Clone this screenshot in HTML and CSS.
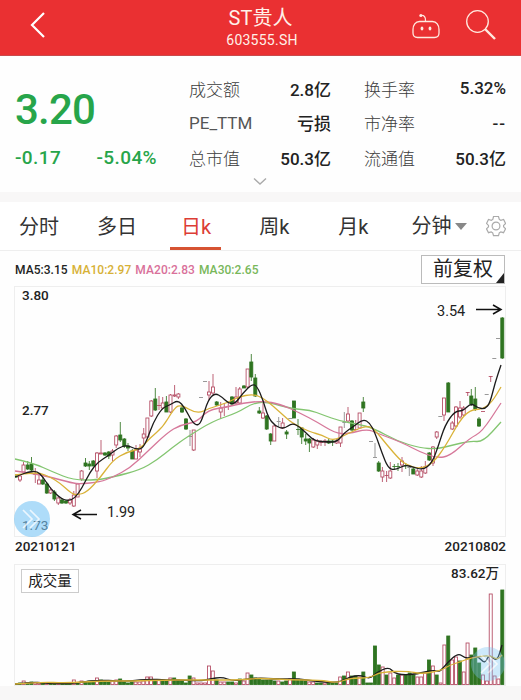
FILE: index.html
```html
<!DOCTYPE html>
<html lang="zh-CN">
<head>
  <meta charset="utf-8">
  <meta name="viewport" content="width=device-width, initial-scale=1">
  <title>ST贵人 603555.SH</title>
  <link rel="stylesheet" href="styles.css">
</head>
<body>
  <header class="topbar">
    <svg class="icon-back" width="20" height="30" viewBox="0 0 20 30"><path d="M16 3 4 15l12 12"/></svg>
    <div class="topbar-title">
      <h1>ST贵人</h1>
      <p>603555.SH</p>
    </div>
    <svg class="icon-robot" width="30" height="28" viewBox="0 0 30 28">
      <path d="M10 2.500c3-.5 5 1.500 4.500 6M8.500 8.500h13c4 0 6.500 3.500 6.500 8v3.500c0 3-1.500 4.500-4.500 4.500h-17C3.500 24.500 2 23 2 20v-3.500c0-4.500 2.500-8 6.500-8z"/>
      <circle cx="9.800" cy="2.600" r="1.500"/><ellipse cx="11" cy="15.500" rx="1.400" ry="1.900"/><ellipse cx="19" cy="15.500" rx="1.400" ry="1.900"/>
    </svg>
    <svg class="icon-search" width="32" height="32" viewBox="0 0 32 32"><circle cx="12.500" cy="12.500" r="10.800"/><path class="handle" d="m20 20 10 10"/></svg>
  </header>

  <section class="quote">
    <div class="price">
      <strong>3.20</strong>
      <div class="change"><span>-0.17</span><span>-5.04%</span></div>
    </div>
    <dl class="stats">
      <div><dt>成交额</dt><dd>2.8亿</dd></div>
      <div><dt>换手率</dt><dd>5.32%</dd></div>
      <div><dt class="latin">PE_TTM</dt><dd>亏损</dd></div>
      <div><dt>市净率</dt><dd class="dash">--</dd></div>
      <div><dt>总市值</dt><dd>50.3亿</dd></div>
      <div><dt>流通值</dt><dd>50.3亿</dd></div>
    </dl>
    <svg class="more" width="14" height="9" viewBox="0 0 14 9"><path d="m1 1.500 6 5.500 6-5.500"/></svg>
  </section>

  <nav class="tabs">
    <a>分时</a>
    <a>多日</a>
    <a class="active">日k</a>
    <a>周k</a>
    <a>月k</a>
    <a class="minute">分钟<i class="caret"></i></a>
    <svg class="icon-gear" width="20" height="22" viewBox="0 0 20 22"><path d="M7.500 1.500h5l.8 2.900 1.500.9 2.800-.8 2 4-2 1.900v1.400l2 2-2.100 3.900-2.700-.8-1.500.9-.8 2.800h-5l-.8-2.800-1.500-.9-2.700.8L.5 13.800l2-2v-1.400l-2-1.900 2-4 2.800.8 1.500-.9z"/><circle cx="10" cy="11" r="3.900"/></svg>
  </nav>

  <main class="chart">
    <div class="legend">
      <span class="ma5">MA5:3.15</span>
      <span class="ma10">MA10:2.97</span>
      <span class="ma20">MA20:2.83</span>
      <span class="ma30">MA30:2.65</span>
      <button class="adjust">前复权</button>
    </div>
    <div class="plot plot-price">
      <svg id="price" width="492" height="251" viewBox="14 286 492 251"></svg>
      <span class="label y-top">3.80</span>
      <span class="label y-mid">2.77</span>
      <span class="label y-low">1.73</span>
      <span class="label high">3.54</span>
      <span class="label low">1.99</span>
      <svg class="pager" width="36" height="36" viewBox="0 0 36 36"><circle cx="18" cy="18" r="18"/><path d="m9 9 9 9-9 9M16 9l9 9-9 9"/></svg>
    </div>
    <div class="dates"><span>20210121</span><span>20210802</span></div>
    <div class="plot plot-volume">
      <svg id="volume" width="492" height="122" viewBox="14 564 492 122"></svg>
      <span class="label vol-name">成交量</span>
      <span class="label vol-max">83.62万</span>
      <svg class="pager pager-right" width="36" height="36" viewBox="0 0 36 36"><circle cx="18" cy="18" r="17"/><path d="m11 9 9 9-9 9M18 9l9 9-9 9"/></svg>
    </div>
  </main>
  <script src="chart.js"></script>
</body>
</html>
```
FILE: styles.css
```css
* {
  box-sizing: border-box;
}

body {
  margin: 0;
  width: 521px;
  height: 700px;
  overflow: hidden;
  background: #f8f7f7;
  color: #222;
  font-family: Roboto, "Noto Sans CJK SC", sans-serif;
}

svg {
  display: block;
  fill: none;
}

/* top bar */
.topbar {
  display: flex;
  align-items: center;
  height: 56px;
  padding: 0 24px 0 28px;
  background: #ea3032;
  border-bottom: 1px solid #c94a4c;
  color: #fff0e8;
}

.topbar svg {
  stroke: #ffe9df;
  stroke-width: 1.3;
}

.topbar .icon-back {
  margin-top: -6px;
  stroke: #fff;
  stroke-width: 2.2;
}

.topbar-title {
  flex: 1;
  padding-left: 65px;
  text-align: center;
}

.topbar h1 {
  margin: 0 0 0 -3px;
  font-size: 20px;
  line-height: 26px;
  font-weight: 400;
}

.topbar p {
  margin: 0 0 1px;
  font-size: 14px;
  line-height: 18px;
  letter-spacing: 0.25px;
}

.icon-robot {
  margin: -2px 24px 0 0;
}

.icon-robot circle,
.icon-robot ellipse {
  fill: #ffe9df;
  stroke: none;
}

.icon-search {
  margin-top: -5px;
}

.icon-search .handle {
  stroke-width: 2.4;
}

/* quote */
.quote {
  position: relative;
  display: flex;
  height: 136px;
  padding-left: 15px;
  background: #fefefe;
}

.price {
  width: 174px;
  color: #27a54a;
}

.price strong {
  display: block;
  margin-top: 29px;
  font-size: 42px;
  line-height: 50px;
  font-weight: 500;
  letter-spacing: -0.8px;
}

.change {
  display: flex;
  justify-content: space-between;
  width: 142px;
  margin-top: 11px;
  font-size: 19px;
  line-height: 24px;
  font-weight: 500;
  letter-spacing: 0.4px;
}

.stats {
  display: grid;
  grid-template-columns: 142px 142px;
  grid-auto-rows: 34.5px;
  column-gap: 33px;
  margin: 15px 0 0;
}

.stats div {
  display: flex;
  justify-content: space-between;
  align-items: center;
}

.stats dt {
  font-size: 17px;
  font-weight: 300;
  color: #3c3c3c;
}

.stats .latin {
  font-size: 17px;
  font-weight: 400;
  color: #555;
}

.stats dd {
  margin: 0;
  font-size: 17px;
  font-weight: 500;
}

.stats .dash {
  letter-spacing: 1px;
}

.more {
  position: absolute;
  left: 253px;
  bottom: 6px;
  stroke: #aaa;
  stroke-width: 1.4;
}

/* tabs */
.tabs {
  display: flex;
  align-items: center;
  height: 49px;
  margin-top: 10px;
  padding: 0 15px 0 19px;
  background: #fff;
  border-bottom: 1px solid #eee;
  color: #333;
  font-size: 20px;
}

.tabs a {
  height: 48px;
  line-height: 51px;
  margin-right: 38px;
}

.tabs .active {
  margin: 0 38px 0 -5px;
  padding: 0 10px 0 11px;
  border-bottom: 3px solid #d65332;
  color: #dc3d35;
}

.tabs .active + a {
  margin-right: 49px;
}

.tabs .active + a + a {
  margin-right: 43px;
}

.tabs .minute {
  display: flex;
  align-items: center;
  margin-right: auto;
}

.caret {
  margin-left: 4px;
  border: 6px solid transparent;
  border-top: 7px solid #888;
  border-bottom: 0;
}

.icon-gear {
  stroke: #aaa;
  stroke-width: 1.2;
}

/* charts */
.chart {
  height: 435px;
  padding: 0 15px 0 14px;
  background: #fefefe;
}

.legend {
  display: flex;
  align-items: center;
  gap: 4px;
  height: 35px;
  padding-left: 1px;
  font-size: 12px;
  font-weight: 500;
  letter-spacing: 0.05px;
  white-space: nowrap;
}

.legend span {
  padding-top: 2px;
}

.ma10 { color: #d7b136; }
.ma20 { color: #d9709a; }
.ma30 { color: #78b75a; }

.adjust {
  position: relative;
  width: 84px;
  height: 29px;
  margin: 1px 1px 0 auto;
  padding: 0 0 1px;
  border: 1px solid #bbb;
  background: #fff;
  color: #222;
  font: 20px/27px Roboto, "Noto Sans CJK SC", sans-serif;
}

.adjust::after {
  content: "";
  position: absolute;
  right: 0;
  bottom: 0;
  border-left: 8px solid transparent;
  border-bottom: 10px solid #222;
}

.plot {
  position: relative;
  width: 492px;
  outline: 1px solid #eee;
  outline-offset: -1px;
}

.label {
  position: absolute;
  font-size: 13.5px;
  line-height: 18px;
  font-weight: 500;
}

.y-top { left: 8px; top: 0; }
.y-mid { left: 8px; top: 115px; }
.y-low { left: 8px; top: 230px; font-weight: 400; }
.high { left: 423px; top: 17px; font-size: 14.5px; font-weight: 400; }
.low { left: 93px; top: 218px; font-size: 14.5px; font-weight: 400; }

.pager {
  position: absolute;
  left: 0;
  top: 215px;
  fill: #78c5f5;
  fill-opacity: 0.6;
}

.pager path {
  fill: none;
  stroke: #fff;
  stroke-width: 1.7;
  opacity: 0.75;
}

.pager-right {
  left: 456px;
  top: 82px;
  opacity: 0.6;
}

.dates {
  display: flex;
  justify-content: space-between;
  height: 27px;
  padding-left: 1px;
  font-size: 13.5px;
  line-height: 18px;
  font-weight: 500;
}

.vol-name {
  left: 7px;
  top: 5px;
  width: 58px;
  height: 24px;
  border: 1px solid #ccc;
  background: #fff;
  font-size: 14.5px;
  font-weight: 400;
  line-height: 23px;
  text-align: center;
}

.vol-max {
  right: 7px;
  top: 0;
}

.up {
  fill: #fff;
  stroke: #b2475f;
  stroke-width: 0.85;
}

.down {
  fill: #2f7421;
  stroke: #2f7421;
  stroke-width: 0.85;
}

.flat {
  stroke: #999;
}

.line5, .line10, .line20, .line30 { stroke-width: 1.3; }
.line5 { stroke: #1c1c1c; }
.line10 { stroke: #d9b238; }
.line20 { stroke: #d6789a; }
.line30 { stroke: #83c570; }

.arrow {
  stroke: #111;
  stroke-width: 1.5;
}
```
FILE: chart.js
```javascript
// x, kind (u = up, d = down, f = flat), high, body top, body bottom, low
const candles = `
16 d 474 476 477 478|20 u 474 476 480 482|23.5 u 462 465 472 473|27.7 d 461 465 469 470|31.5 d 457 464 470 471|35.3 u 468 474 474 483|39 u 475 480 484 484|42.8 d 477 480 484 485
46.8 d 482 484 493 494|50.6 u 487 490 493 494|54.4 d 490 492 499 501|58.3 u 496 498 503 505|62 d 498 500 503 504|66 d 500 501 503 504|70 u 498 500 503 505|73.8 u 491 495 506 507|77.6 u 483 484 497 497
81.6 u 470 471 479 481|85.5 d 458 463 466 467|89.3 d 461 464 466 470|93.3 d 460 461 466 466|97 u 452 453 471 478|101 u 440 453 454 454|105 d 452 453 455 456|108.8 d 451 452 456 459|112.500 u 449 451 455 461
116.2 u 435 436 445 448|120.3 d 422 435 440 442|124.3 d 438 439 446 448|128 d 443 446 448 451|132.3 d 449 451 459 459|136 u 445 450 459 459|140 u 444 449 452 457|143.7 u 428 434 438 444|147.4 u 418 418 437 438
151.3 u 400 401 416 417|155.3 d 388 399 410 411|159 u 396 405 405 410|162.7 u 397 403 408 409|166.4 d 396 402 412 412|170.500 u 394 395 412 413|174.600 u 385 395 396 397|178.400 u 393 394 397 399|182 d 405 408 412 413
186 d 418 419 429 430|190 f 430 436 436 446|193.700 u 430 430 450 451|201 f 397 397 397 397|205 f 381 381 381 381|209 u 381 392 395 400|213 u 374 387 393 396|216.700 d 401 402 405 406|220.700 u 402 408 412 419
224.300 u 403 407 407 416|228.300 u 402 406 406 410|232 d 396 397 404 405|236 u 387 397 403 404|239.700 u 387 389 403 404|244 d 385 386 388 388|247.600 u 369 369 387 388|251.300 d 354 362 377 381|255.300 d 374 378 396 397
259.300 d 407 411 413 414|263 u 400 413 418 419|266.700 d 415 416 429 430|270.700 d 433 434 441 445|274.300 u 425 426 441 441|278.700 f 417 421 421 427|282.600 u 418 423 428 429|286.600 d 430 432 434 439|290.300 f 418 418 418 418
294 d 401 401 418 418|298 d 419 429 429 435|301.700 d 427 428 437 444|305.700 d 434 439 441 445|309.400 d 438 439 443 452|313.300 u 438 440 447 448|317.300 u 439 441 445 449|321 u 440 442 442 446|325 u 439 441 442 446
328.700 d 439 441 443 444|332.600 d 440 441 442 446|336.600 u 439 441 443 444|340.500 u 427 427 443 447|344.300 f 412 422 422 428|348 u 407 414 421 422|352 d 420 421 430 431|355.700 u 420 429 429 430|359.600 u 413 413 428 429
363.300 d 397 402 408 412|371 f 441 441 441 441|375 f 443 457 457 457|378.700 d 461 463 471 472|382.400 u 467 471 477 482|386.600 u 471 475 475 482|390.300 u 462 471 478 479|394.300 d 464 466 466 470|398 d 463 466 466 471
402 u 457 461 465 472|405.700 d 463 465 465 469|409.300 f 465 467 467 476|413.300 d 467 469 474 474|417.300 u 469 471 475 476|421.300 u 466 471 477 478|425.300 u 461 467 473 474|429.300 d 452 453 460 461|433 u 446 447 463 466
436.700 u 431 432 437 439|440.300 f 416 416 416 416|444 u 398 398 415 421|448.300 d 382 383 412 412|452.300 u 421 423 429 430|456 u 406 407 426 427|460 u 401 408 417 419|463.700 u 406 408 415 416|467.700 u 392 392 392 396
471.300 d 389 396 404 406|475.300 d 387 399 409 411|479 d 417 419 426 427|483 u 411 411 411 411|486.700 f 394 394 394 394|490.700 u 376 376 376 382|494.300 f 358 358 358 358|498 f 338 338 338 338|502.300 d 317 318 358 359`;

const priceLines = {
  line30: '15,459 33,463 53,472 73,480 97,480 113,477 140,470 157,460 173,447 187,437 213,421 237,413 253,403 267,402 293,409 310,410 323,415 340,421 357,424 373,428 397,441 420,448 437,449 453,445 470,441 483,442 501,422',
  line20: '15,471 30,473 50,477 72,483 80,484 100,482 113,477 130,468 147,452 167,433 180,425 197,422 208,410 227,407 243,403 263,401 280,404 300,413 317,422 335,433 347,434 367,429 377,433 403,443 420,452 437,458 450,456 470,438 482,432 501,403',
  line10: '15,475 30,473 40,473 50,477 60,483 72,494 78,495 87,492 100,478 113,460 127,452 140,449 150,438 163,427 173,410 180,404 197,414 210,408 227,403 238,397 253,394 263,398 273,406 283,415 292,423 310,432 322,435 333,441 347,434 367,425 375,430 387,445 400,460 407,465 420,469 433,463 445,447 460,420 470,410 483,409 492,402 501,387',
  line5: '15,477 20,475 28,472 37,471 43,477 50,488 60,498 68,501 75,498 82,488 90,472 98,462 108,456 118,448 127,445 135,449 142,449 147,440 153,423 162,408 170,405 178,400 185,408 192,422 198,426 202,420 208,400 215,393 222,397 228,403 235,404 243,393 252,384 257,386 263,400 268,417 275,426 284,429 292,423 300,427 308,435 315,441 327,442 337,442 345,432 353,427 363,419 370,423 375,433 382,453 388,468 395,470 405,465 413,467 423,470 432,463 438,447 445,425 455,411 463,411 471,403 478,408 485,409 490,403 495,383 501,365'
};

// one entry per trading day, height in px
const volumes = `d1 d2 u4 d2 d3 u2 u2 d2 u1 d2 d1 u1 d1 d1 d1 u5 d2 u4 d3 d4 d4 u7 d5 d4 d3 u4 u5 d6 d3 d2 d3 u3 u3 u4 u8 u8 d5 u5 d5 d4 u7 d7 d5 d4 d2 d9 u7 u2 u2 u2 u19 u14 d5 u3 u3 d3 d3 u2 d6 u4 u12 d10 d7 d6
d5 d5 d5 d4 u4 d3 d4 u6 d13 d6 d5 d4 u3 u3 d2 d2 u2 d2 d2 d2 u8 d9 u13 d9 d9 u8 d13 d2 d2 d39 d20 u18 d10 u12 u7 d10 u10 d10 d12 d10 u8 u8 u12 d25 u19 d10 u2 u40 d49 u25 u28 d24 u13 u42 d30 d37 d22 u10 u4 u91 u9 u6 d95`.split(/\s+/);

const volumeLines = {
  line5: '15,684 32,682 43,683 67,684 83,682 100,680 117,681 133,681 147,679 167,680 187,680 200,681 210,679 222,677 233,681 247,679 261,678 273,679 287,679 300,679 313,681 337,683 350,677 360,675 370,679 377,672 389,667 394,673 403,675 417,674 433,670 440,672 447,663 458,653 465,658 470,658 478,656 485,664 489,654 497,662 502,645',
  line10: '15,684 40,682 67,683 100,681 133,681 167,680 187,680 200,680 222,680 240,680 260,678 290,680 320,680 337,683 350,678 370,678 380,672 408,671 420,674 440,671 450,665 460,662 470,658 490,655 497,660 502,655'
};

// quadratic segments through the midpoints keep the averages smooth
function smooth(str) {
  const p = str.split(' ').map(s => s.split(',').map(Number));
  let d = `M${p[0]}`;
  for (let i = 1; i < p.length - 1; i++) {
    d += `Q${p[i]} ${(p[i][0] + p[i + 1][0]) / 2},${(p[i][1] + p[i + 1][1]) / 2}`;
  }
  return d + `L${p[p.length - 1]}`;
}

function lines(set) {
  return Object.keys(set).map(k => `<path class="${k}" d="${smooth(set[k])}"/>`).join('');
}

const kinds = { u: 'up', d: 'down', f: 'flat' };

let price = '';
candles.trim().split(/[|\n]/).forEach(row => {
  const [x, kind, high, top, bottom, low] = row.split(' ').map((v, i) => i === 1 ? v : +v);
  let shape = `<path d="M${x} ${high}V${low}"/>`;
  if (bottom > top) {
    shape += `<rect x="${x - 1.5}" y="${top}" width="3" height="${bottom - top}"/>`;
  } else {
    shape += `<path d="M${x - 2} ${top + 0.5}h4"/>`;
  }
  price += `<g class="${kinds[kind]}">${shape}</g>`;
});
price += lines(priceLines);
price += '<path class="arrow" d="M476 309.500h25m-8-4.500 8 4.500-8 4.500M97 514.500H73m8-4.500-8 4.500 8 4.500"/>';
document.getElementById('price').innerHTML = price;

let volume = '';
volumes.forEach((v, i) => {
  const x = 502.3 - (volumes.length - 1 - i) * 3.86;
  const h = +v.slice(1);
  volume += `<rect class="${kinds[v[0]]}" x="${x - 1.5}" y="${685 - h}" width="3" height="${h - 0.5}"/>`;
});
volume += lines(volumeLines);
document.getElementById('volume').innerHTML = volume;
```
